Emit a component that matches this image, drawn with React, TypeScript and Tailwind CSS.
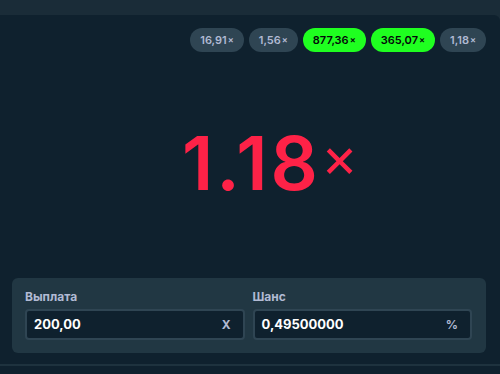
import React from 'react';

const pills = [
  { v: '16,91', win: false },
  { v: '1,56', win: false },
  { v: '877,36', win: true },
  { v: '365,07', win: true },
  { v: '1,18', win: false },
];

const Field = ({ label, value, suffix }: { label: string; value: string; suffix: string }) => (
  <div className="flex-1">
    <p className="text-[12px] font-bold text-[#b1bad3] leading-none mb-[6px]">{label}</p>
    <div className="h-[31px] flex items-center justify-between bg-[#0f212e] border-2 border-[#2f4553] rounded-[4px] pl-[7px] pr-[12px]">
      <span className="text-[13px] font-bold text-white">{value}</span>
      <span className="text-[12px] font-bold text-[#b1bad3]">{suffix}</span>
    </div>
  </div>
);

export default function App() {
  return (
    <div className="w-[500px] h-[374px] bg-[#1a2c38] overflow-hidden" style={{ fontFamily: 'Inter, "Noto Sans", sans-serif' }}>
      <div className="mt-[15px] h-[349px] bg-[#0f212e] rounded-tr-[6px] flex flex-col">
        {/* History pills */}
        <div className="flex justify-end gap-[5px] pr-[14px] pt-[13px]">
          {pills.map((p, i) => (
            <div
              key={i}
              className={`h-[24px] px-[10px] rounded-full flex items-center text-[11px] font-semibold ${
                p.win ? 'bg-[#1fff20] text-[#05080a]' : 'bg-[#2f4553] text-[#b1bad3]'
              }`}
            >
              {p.v}
              <span className="text-[9px] ml-[1px]">×</span>
            </div>
          ))}
        </div>

        {/* Multiplier */}
        <div className="flex items-center pl-[182px] mt-[75px] h-[72px]">
          <span className="text-[74px] font-semibold text-[#fe2247] leading-none tracking-[3px]">1.18</span>
          <span className="text-[56px] font-normal text-[#fe2247] leading-none mb-[12px]">×</span>
        </div>

        {/* Inputs */}
        <div className="ml-[12px] mr-[14px] mt-[79px] bg-[#213743] rounded-[6px] pt-[13px] pb-[13px] pl-[13px] pr-[14px] flex gap-[8px]">
          <Field label="Выплата" value="200,00" suffix="X" />
          <Field label="Шанс" value="0,49500000" suffix="%" />
        </div>
      </div>
      <div className="h-[2px] bg-[#1e323e]" />
      <div className="h-[8px] bg-[#0f212e]" />
    </div>
  );
}
